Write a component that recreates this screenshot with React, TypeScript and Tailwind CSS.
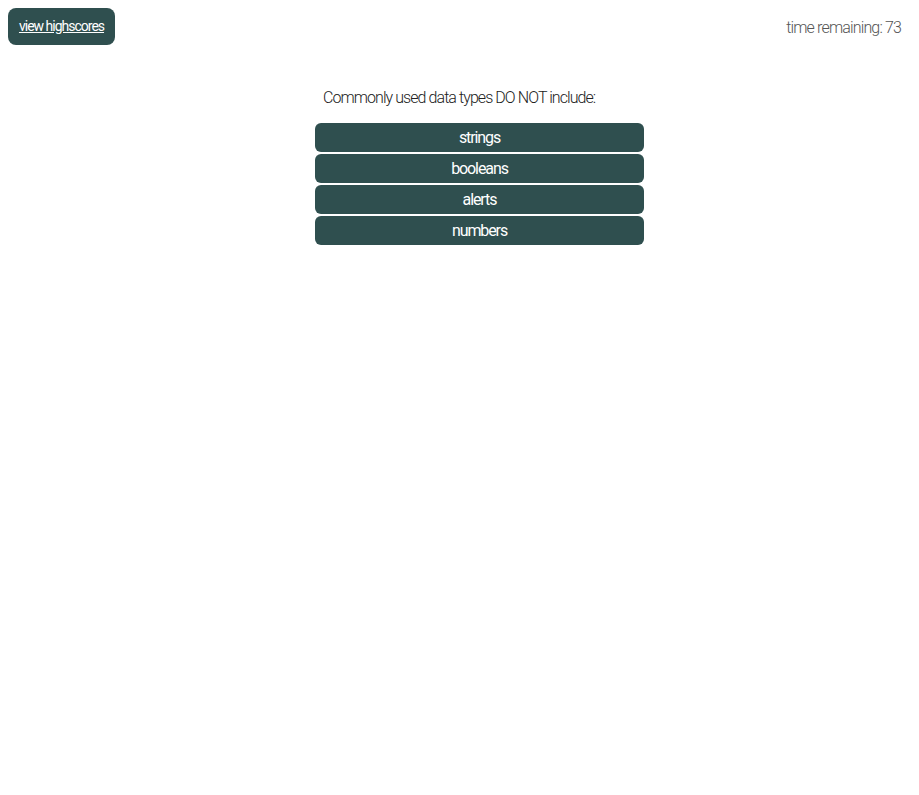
const choices = ['strings', 'booleans', 'alerts', 'numbers'];

const App: React.FC = () => {
  return (
    <div className="min-h-screen bg-white font-['Roboto',sans-serif]">
      <header className="flex items-start justify-between px-2 pt-2">
        <button className="h-[37px] w-[107px] rounded-lg bg-[#2f4f4f] text-[14px] tracking-[-1px] text-white underline">
          view highscores
        </button>
        <div className="mt-[8px] mr-[10px] text-[16px] font-light tracking-[-0.85px] text-[#555]">
          time remaining: 73
        </div>
      </header>

      <main className="ml-[315px] mt-[41px] w-[329px]">
        <p className="pl-2 text-[16px] font-light tracking-[-0.93px] text-[#222]">
          Commonly used data types DO NOT include:
        </p>
        <div className="mt-[13px] flex flex-col gap-[2px]">
          {choices.map((choice) => (
            <button
              key={choice}
              className="h-[29px] w-full rounded-md bg-[#2f4f4f] text-[16px] tracking-[-1.1px] text-white"
            >
              {choice}
            </button>
          ))}
        </div>
      </main>
    </div>
  );
};

export default App;
